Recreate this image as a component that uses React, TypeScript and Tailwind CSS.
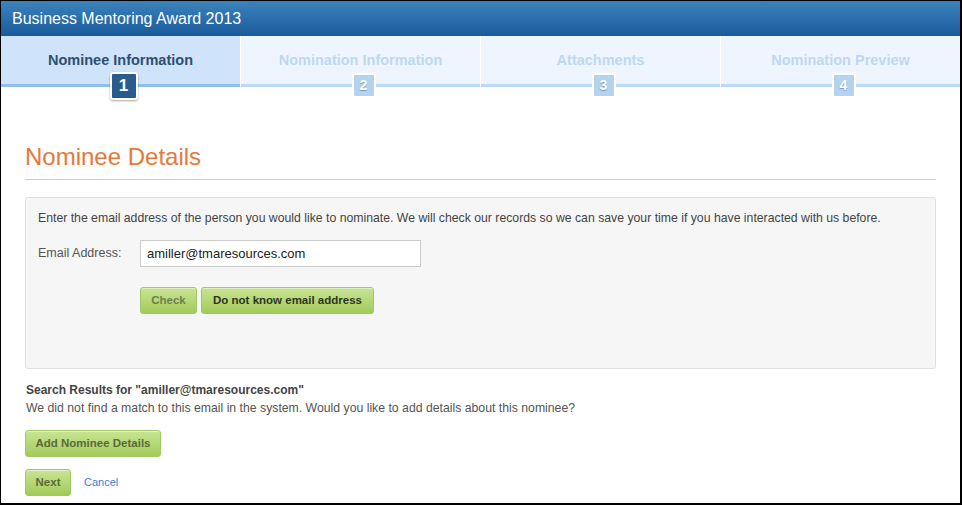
import React from 'react';

const steps = [
  { n: 1, label: 'Nominee Information' },
  { n: 2, label: 'Nomination Information' },
  { n: 3, label: 'Attachments' },
  { n: 4, label: 'Nomination Preview' },
];

const font = { fontFamily: '"Liberation Sans", Arial, sans-serif' };

function GreenButton({ children, className = '' }: { children: React.ReactNode; className?: string }) {
  return (
    <button
      type="button"
      className={`h-[27px] rounded-[3px] border border-[#a3c765] bg-gradient-to-b from-[#c8e494] to-[#a2cb58] text-[11.5px] font-bold leading-none shadow-[inset_0_1px_0_rgba(255,255,255,0.45)] ${className}`}
    >
      {children}
    </button>
  );
}

export default function App() {
  return (
    <div style={font} className="w-[962px] h-[505px] overflow-hidden border-l border-t border-r-2 border-b-2 border-black bg-white">
      {/* Title bar */}
      <div className="h-[35px] bg-gradient-to-b from-[#3c83bc] to-[#195a9b] pl-[11px] pt-[8px] text-[16px] leading-[19px] text-white">
        Business Mentoring Award 2013
      </div>

      {/* Wizard steps */}
      <div className="grid grid-cols-4 gap-px bg-white">
        {steps.map((s) => {
          const active = s.n === 1;
          return (
            <div key={s.n} className="relative">
              <div
                className={`h-[48px] pt-[15px] text-center text-[14.5px] font-bold leading-[18px] ${
                  active ? 'bg-[#cfe4fa] text-[#2e4f72]' : 'bg-[#eef5fe] text-[#bed8f3]'
                }`}
              >
                {s.label}
              </div>
              <div className={`h-[3px] ${active ? 'bg-[#8fbff1]' : 'bg-[#bcd9f8]'}`} />
              {active ? (
                <div className="absolute left-[calc(50%+3px)] top-[36px] flex h-[28px] w-[28px] -translate-x-1/2 items-center justify-center rounded-[3px] border-2 border-white bg-[#2b5b8a] text-[17px] font-bold text-white shadow-[0_1px_2px_rgba(0,0,0,0.35)]">
                  {s.n}
                </div>
              ) : (
                <div className="absolute left-[calc(50%+3px)] top-[37px] flex h-[25px] w-[24px] -translate-x-1/2 items-center justify-center rounded-[3px] border-2 border-white bg-[#b4d3ef] text-[14px] font-bold text-white [text-shadow:0_1px_1px_rgba(60,100,150,0.5)]">
                  {s.n}
                </div>
              )}
            </div>
          );
        })}
      </div>

      {/* Content */}
      <div className="px-[24px]">
        <h1 className="mt-[56px] text-[24px] leading-[28px] font-normal text-[#e8773a]">Nominee Details</h1>
        <div className="mt-[8px] h-px bg-[#cccccc]" />

        <div className="mt-[17px] h-[172px] rounded-[3px] border border-[#e1e1e1] bg-[#f6f6f6] px-[12px] pt-[13px]">
          <p className="text-[12.25px] leading-[14px] text-[#444]">
            Enter the email address of the person you would like to nominate. We will check our records so we can save your time if you have interacted with us before.
          </p>
          <div className="mt-[15px] flex">
            <label className="w-[102px] pt-[6px] text-[12.5px] leading-[14px] text-[#555]">Email Address:</label>
            <div className="flex flex-col">
              <div className="flex h-[27px] w-[281px] items-center border border-[#cccccc] bg-white px-[6px] text-[13px] text-[#222]">
                amiller@tmaresources.com
              </div>
              <div className="mt-[20px] flex gap-[4px]">
                <GreenButton className="w-[57px] text-[#6e804a]">Check</GreenButton>
                <GreenButton className="w-[173px] text-[#2c3520]">Do not know email address</GreenButton>
              </div>
            </div>
          </div>
        </div>

        <div className="mt-[12px] pl-[1px] leading-[18px]">
          <div className="text-[12px] font-bold text-[#444]">Search Results for "amiller@tmaresources.com"</div>
          <div className="text-[12.25px] text-[#555]">We did not find a match to this email in the system. Would you like to add details about this nominee?</div>
        </div>

        <GreenButton className="mt-[13px] w-[136px] text-[#5a6b36]">Add Nominee Details</GreenButton>

        <div className="mt-[12px] flex items-center gap-[13px]">
          <GreenButton className="w-[46px] text-[#5a6b36]">Next</GreenButton>
          <a className="text-[11px] text-[#3b7dd0]">Cancel</a>
        </div>
      </div>
    </div>
  );
}
